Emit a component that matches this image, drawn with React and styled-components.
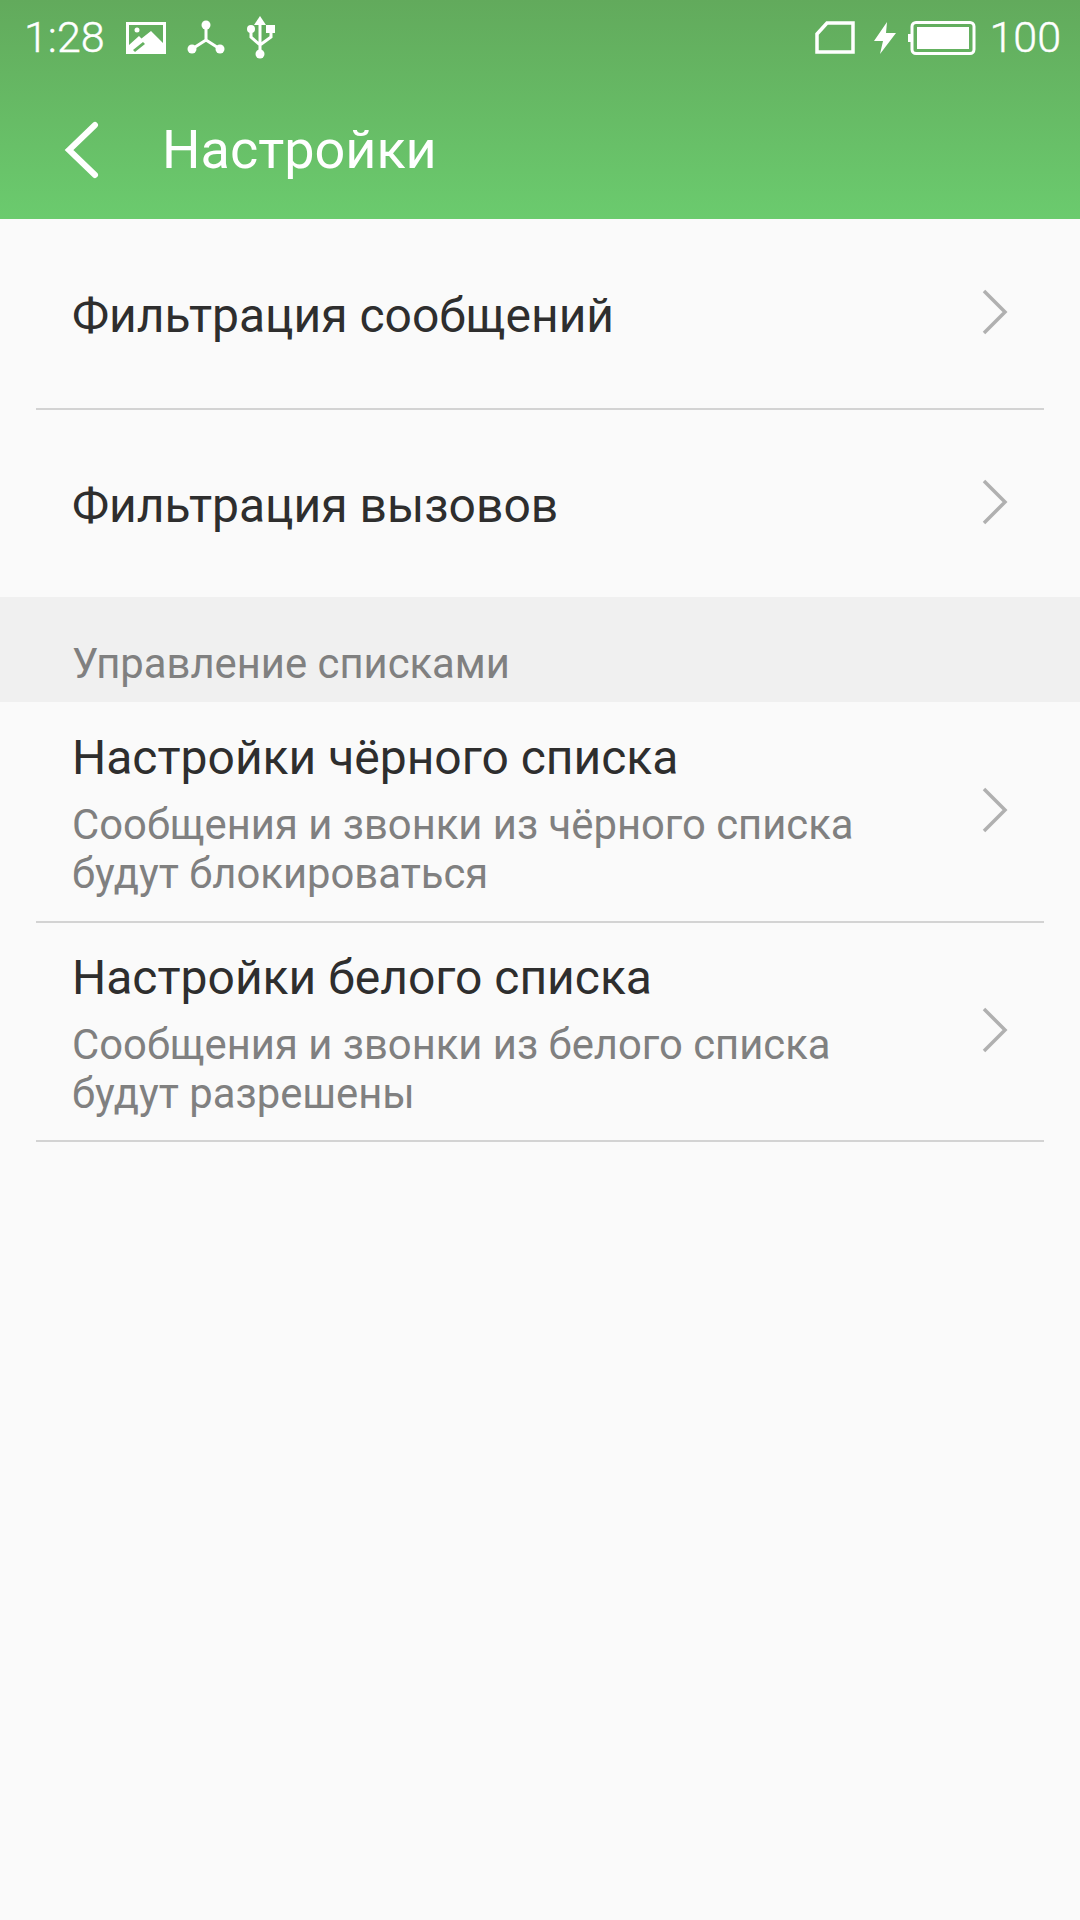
import React from "react";
import styled, { createGlobalStyle } from "styled-components";

const Global = createGlobalStyle`
  html, body { margin: 0; padding: 0; background: #fafafa; }
  * { box-sizing: border-box; }
`;

const Page = styled.div`
  width: 1080px;
  height: 1920px;
  background: #fafafa;
  font-family: Roboto, "Noto Sans", sans-serif;
  overflow: hidden;
`;

const Header = styled.header`
  height: 219px;
  background: linear-gradient(180deg, #62aa5c 0%, #6bcb6e 100%);
  color: #fff;
`;

const StatusBar = styled.div`
  height: 75px;
  padding: 0 19px 0 24px;
  display: flex;
  align-items: center;
  justify-content: space-between;
`;

const StatusGroup = styled.div`
  display: flex;
  align-items: center;
`;

const StatusText = styled.span`
  font-size: 43px;
  font-weight: 300;
  line-height: 75px;
  -webkit-text-stroke: 0.4px #fff;
  margin-left: ${({ $ml }) => $ml || 0}px;
`;

const StatusIcon = styled.svg`
  display: block;
  flex: none;
  margin-left: ${({ $ml }) => $ml || 0}px;
`;

const Toolbar = styled.div`
  height: 149px;
  padding-left: 63px;
  display: flex;
  align-items: center;
`;

const Title = styled.h1`
  margin: 0 0 0 61px;
  font-size: 54px;
  font-weight: 400;
  color: #fff;
`;

const Row = styled.div`
  margin: 0 36px;
  padding: 0 36px;
  height: ${({ $h }) => $h}px;
  display: flex;
  align-items: center;
  justify-content: space-between;
  border-bottom: ${({ $noLine }) => ($noLine ? "none" : "2px solid #d3d3d3")};
`;

const RowText = styled.div`
  display: flex;
  flex-direction: column;
  padding-top: 4px;
`;

const RowTitle = styled.div`
  font-size: 48px;
  line-height: 56px;
  color: #2e2e2e;
`;

const RowSub = styled.div`
  font-size: 41.8px;
  line-height: 49px;
  color: #808080;
  margin-top: 14px;
`;

const SectionLabel = styled.div`
  height: 105px;
  background: #f0f0f0;
  padding: 42px 0 0 72px;
  font-size: 41.8px;
  line-height: 50px;
  color: #808080;
`;

const ChevronIcon = styled.svg`
  flex: none;
  margin-bottom: 3px;
`;

const Chevron = () => (
  <ChevronIcon width="26" height="46" viewBox="0 0 26 46">
    <path d="M2 2 L23 23 L2 44" fill="none" stroke="#b0b0b0" strokeWidth="3.5" />
  </ChevronIcon>
);

const items = [
  { h: 221, title: "Настройки чёрного списка", sub: ["Сообщения и звонки из чёрного списка", "будут блокироваться"] },
  { h: 219, title: "Настройки белого списка", sub: ["Сообщения и звонки из белого списка", "будут разрешены"] },
];

export default function App() {
  return (
    <Page>
      <Global />
      <Header>
        <StatusBar>
          <StatusGroup>
            <StatusText>1:28</StatusText>
            <StatusIcon $ml={21} width="40" height="32" viewBox="0 0 40 32">
              <path
                fillRule="evenodd"
                fill="#fff"
                d="M0 0H40V32H0ZM3 3V23L13 14L15.5 16.5L25 9L37 21V3ZM17 20L7 28L9 30L19 22Z"
              />
              <circle cx="11" cy="8" r="2.5" fill="#fff" />
            </StatusIcon>
            <StatusIcon $ml={21} width="38" height="36" viewBox="0 0 38 36">
              <path d="M19 5V20M19 20L5 29M19 20L33 29" stroke="#fff" strokeWidth="3" fill="none" />
              <circle cx="19" cy="5" r="4.5" fill="#fff" />
              <circle cx="5" cy="29" r="4.5" fill="#fff" />
              <circle cx="33" cy="29" r="4.5" fill="#fff" />
            </StatusIcon>
            <StatusIcon $ml={21} width="30" height="44" viewBox="0 0 30 44">
              <path d="M14 0L20 9H8Z" fill="#fff" />
              <path d="M14 8V36M5 15V21L14 29M25 15V21L14 29" stroke="#fff" strokeWidth="3" fill="none" />
              <circle cx="5" cy="13" r="4" fill="#fff" />
              <rect x="20" y="9" width="9" height="8" fill="#fff" />
              <circle cx="14" cy="38" r="4.5" fill="#fff" />
            </StatusIcon>
          </StatusGroup>
          <StatusGroup>
            <StatusIcon width="40" height="33" viewBox="0 0 40 33">
              <path d="M38 2V31H2V13L12 2Z" fill="none" stroke="#fff" strokeWidth="3.5" />
            </StatusIcon>
            <StatusIcon $ml={19} width="22" height="32" viewBox="0 0 22 32">
              <path d="M13 0L0 19H9L6 32L22 11H12Z" fill="#fff" />
            </StatusIcon>
            <StatusIcon $ml={12} width="68" height="34" viewBox="0 0 68 34">
              <rect x="4" y="1.5" width="62" height="31" rx="4" fill="none" stroke="#fff" strokeWidth="3" />
              <rect x="9" y="6" width="52" height="22" fill="#fff" />
              <rect x="0" y="13" width="3" height="8" fill="#fff" />
            </StatusIcon>
            <StatusText $ml={13}>100</StatusText>
          </StatusGroup>
        </StatusBar>
        <Toolbar>
          <svg width="38" height="58" viewBox="0 0 38 58">
            <path d="M32 4L6 29L32 54" fill="none" stroke="#fff" strokeWidth="6" strokeLinecap="round" />
          </svg>
          <Title>Настройки</Title>
        </Toolbar>
      </Header>
      <Row $h={191}>
        <RowText>
          <RowTitle>Фильтрация сообщений</RowTitle>
        </RowText>
        <Chevron />
      </Row>
      <Row $h={187} $noLine>
        <RowText>
          <RowTitle>Фильтрация вызовов</RowTitle>
        </RowText>
        <Chevron />
      </Row>
      <SectionLabel>Управление списками</SectionLabel>
      {items.map((item) => (
        <Row $h={item.h} key={item.title}>
          <RowText>
            <RowTitle>{item.title}</RowTitle>
            <RowSub>{item.sub[0]}<br />{item.sub[1]}</RowSub>
          </RowText>
          <Chevron />
        </Row>
      ))}
    </Page>
  );
}
